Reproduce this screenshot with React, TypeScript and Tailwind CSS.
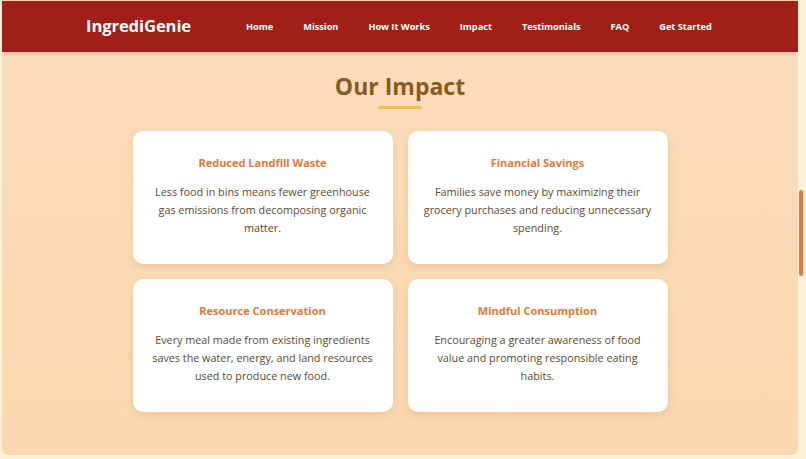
import React from "react";

const NAV = ["Home", "Mission", "How It Works", "Impact", "Testimonials", "FAQ", "Get Started"];

const CARDS = [
  {
    title: "Reduced Landfill Waste",
    lines: ["Less food in bins means fewer greenhouse", "gas emissions from decomposing organic", "matter."],
  },
  {
    title: "Financial Savings",
    lines: ["Families save money by maximizing their", "grocery purchases and reducing unnecessary", "spending."],
  },
  {
    title: "Resource Conservation",
    lines: ["Every meal made from existing ingredients", "saves the water, energy, and land resources", "used to produce new food."],
  },
  {
    title: "Mindful Consumption",
    lines: ["Encouraging a greater awareness of food", "value and promoting responsible eating", "habits."],
  },
];

export default function App() {
  return (
    <div
      className="flex h-[459px] w-[806px] overflow-hidden bg-[#fcf1d8]"
      style={{ fontFamily: '"Open Sans", "Liberation Sans", sans-serif' }}
    >
      <div className="ml-[2px] mb-[4px] flex w-[796px] flex-col overflow-hidden rounded-b-md bg-gradient-to-b from-[#fadcbc] to-[#f9d8b0]">
        <header className="mt-[1px] flex h-[51px] shrink-0 items-center bg-[#a11f19] pl-[84px] shadow-[0_2px_4px_rgba(0,0,0,0.15)]">
          <span className="text-[16.6px] font-bold tracking-[-0.1px] text-white">IngrediGenie</span>
          <nav className="ml-[55px] flex gap-[30px] text-[9.2px] font-bold text-white">
            {NAV.map((n) => (
              <span key={n}>{n}</span>
            ))}
          </nav>
        </header>

        <main className="flex flex-col items-center">
          <h2 className="mt-[19px] text-[23px] font-bold leading-[30px] text-[#8c5a1f]">Our Impact</h2>
          <div className="mt-[5px] h-[3px] w-[44px] rounded-full bg-[#f2c14f]" />

          <div className="mt-[22px] grid grid-cols-[260px_260px] gap-[15px]">
            {CARDS.map((c) => (
              <div
                key={c.title}
                className="flex h-[133px] flex-col items-center rounded-[10px] bg-white px-[10px] pt-[24px] text-center shadow-[0_3px_8px_rgba(180,110,50,0.18)]"
              >
                <h3 className="text-[11px] font-bold leading-[16px] text-[#e57a37]">{c.title}</h3>
                <p className="mt-[12px] text-[10.8px] leading-[18px] text-[#5e4a31]">
                  {c.lines.map((l) => (
                    <span key={l} className="block">
                      {l}
                    </span>
                  ))}
                </p>
              </div>
            ))}
          </div>
        </main>
      </div>
      <div className="ml-[1px] mt-[190px] h-[86px] w-[4px] rounded-full bg-[#e7763a]" />
    </div>
  );
}
